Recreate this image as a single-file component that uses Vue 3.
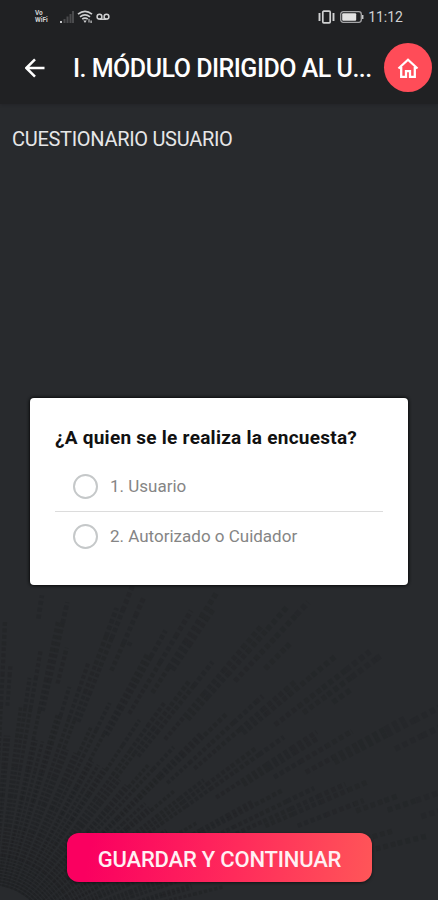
<template>
  <div class="screen">
    <header class="header">
      <div class="status-bar">
        <div class="status-left">
          <div class="vowifi">
            <span>Vo</span>
            <span>WiFi</span>
          </div>
          <svg class="signal" viewBox="0 0 16 14">
            <path d="M1 11h2v2h-2z" fill="#c8c9ca" />
            <path d="M4.500 9h2v4h-2zM7.500 6.500h2v6.500h-2zM10.500 4h2v9h-2zM13 1h2v12h-2z" fill="#4a4b4d" />
          </svg>
          <svg class="wifi" viewBox="0 0 16 14">
            <g fill="none" stroke="#d0d1d2" stroke-width="1.700">
              <path d="M1 4.200q7-5.600 14 0" />
              <path d="M3 6.800q5-4 10 0" />
              <path d="M5.200 9.200q2.800-2.200 5.600 0" />
            </g>
            <path d="M6.300 10.500h3.400L8 13zM11.500 9h1v3.500h-1zM13.500 10.500h1.200v2.500h-1.200z" fill="#d0d1d2" />
          </svg>
          <svg class="voicemail" viewBox="0 0 14 8">
            <g fill="none" stroke="#d0d1d2" stroke-width="1.500">
              <circle cx="3.500" cy="3.700" r="2.400" />
              <circle cx="10.500" cy="3.700" r="2.400" />
              <path d="M3.500 6.200h7" />
            </g>
          </svg>
        </div>
        <div class="status-right">
          <svg class="vibrate" viewBox="0 0 17 14">
            <rect x="4.800" y="1.200" width="7.400" height="11.600" rx="1" fill="none" stroke="#d0d1d2" stroke-width="1.700" />
            <path d="M1.500 3v8M15.500 3v8" fill="none" stroke="#d0d1d2" stroke-width="1.900" />
          </svg>
          <svg class="battery" viewBox="0 0 24 12">
            <rect x=".7" y=".7" width="20.600" height="10.600" rx="2.500" fill="none" stroke="#a5a6a8" stroke-width="1.300" />
            <rect x="2.200" y="2.200" width="14" height="7.600" rx="1" fill="#e2e2e2" />
            <path d="M22.700 4v4" stroke="#c8c9ca" stroke-width="1.500" />
          </svg>
          <span class="clock">11:12</span>
        </div>
      </div>
      <div class="toolbar">
        <button class="back-btn">
          <svg viewBox="0 0 20 20">
            <path d="M19.500 10H2M10 1.300L1.300 10l8.700 8.700" fill="none" stroke="#fff" stroke-width="2.500" />
          </svg>
        </button>
        <h1 class="title">I. MÓDULO DIRIGIDO AL U...</h1>
        <button class="home-btn">
          <svg viewBox="0 0 22 20">
            <path d="M1.500 10.500L11 1.700l9.500 8.800M4.200 9v9.800h4.800v-5.600h4v5.600h4.800V9" fill="none" stroke="#fff" stroke-width="2.300" />
          </svg>
        </button>
      </div>
    </header>

    <main class="content">
      <svg class="dots" viewBox="0 0 438 400">
        <path
          v-for="(ray, i) in rays"
          :key="i"
          :d="ray.d"
          :stroke-width="ray.width"
          :stroke-dasharray="ray.dash"
          :stroke-opacity="ray.opacity"
        />
      </svg>
      <h2 class="subtitle">CUESTIONARIO USUARIO</h2>
      <section class="card">
        <p class="question">¿A quien se le realiza la encuesta?</p>
        <label
          v-for="option in options"
          :key="option.id"
          class="option"
          @click="selected = option.id"
        >
          <span class="radio" :class="{ checked: selected === option.id }"></span>
          <span class="option-text">{{ option.id }}. {{ option.label }}</span>
        </label>
      </section>
      <button class="save-btn">GUARDAR Y CONTINUAR</button>
    </main>
  </div>
</template>

<script setup>
import { ref } from 'vue'

const selected = ref(null)

const options = [
  { id: 1, label: 'Usuario' },
  { id: 2, label: 'Autorizado o Cuidador' },
]

// dotted rays opening from the lower left corner
const rays = []
for (let i = 0; i < 58; i++) {
  const degrees = 14 + i * 1.5 + Math.sin(i * 2.3) * 0.4
  const angle = (degrees * Math.PI) / 180
  const x = Math.cos(angle)
  const y = Math.sin(angle)
  const end = 310 + x * 160 + Math.sin(i * 0.9) * 60
  for (let from = 60; from < end; from += 30) {
    // leave uneven holes between the clusters
    if (from > 190 && Math.sin(i * 1.1 + from * 0.03) > 0.4) continue
    const to = Math.min(from + 30, end)
    const width = 1.6 + from / 110
    rays.push({
      d: `M${x * from - 10} ${445 - y * from}L${x * to - 10} ${445 - y * to}`,
      width,
      dash: `${width * 0.9} ${width * 0.6}`,
      opacity: 0.55 - from / 1300,
    })
  }
}
</script>

<style>
body {
  margin: 0;
  background-color: #282a2d;
}
</style>

<style scoped>
.screen {
  display: flex;
  flex-direction: column;
  width: 100%;
  height: 900px;
  overflow: hidden;
  background-color: #282a2d;
  font-family: Roboto, sans-serif;
}

button {
  padding: 0;
  border: none;
  font-family: inherit;
  cursor: pointer;
}

svg {
  display: block;
}

.header {
  height: 104px;
  background-color: #202123;
  box-shadow: 0 1px 2px rgba(34, 34, 38, 0.7);
}

.status-bar {
  display: flex;
  justify-content: space-between;
  align-items: center;
  height: 34px;
  padding: 0 35px;
}

.status-left,
.status-right {
  display: flex;
  align-items: center;
}

.vowifi {
  display: flex;
  flex-direction: column;
  width: 18px;
  margin-right: 6px;
  color: #d0d1d2;
  font-size: 6.5px;
  font-weight: 700;
  line-height: 7px;
}

.signal {
  width: 16px;
  height: 14px;
}

.wifi {
  width: 16px;
  height: 14px;
  margin-left: 2px;
}

.voicemail {
  width: 14px;
  height: 8px;
  margin-left: 3px;
}

.vibrate {
  width: 17px;
  height: 14px;
}

.battery {
  width: 24px;
  height: 12px;
  margin-left: 5px;
}

.clock {
  margin-left: 4px;
  color: #d0d1d2;
  font-size: 14px;
  line-height: 16px;
}

.toolbar {
  display: flex;
  align-items: center;
  height: 67px;
  padding: 0 6px 0 25px;
}

.back-btn {
  width: 20px;
  height: 20px;
  background: none;
}

.title {
  flex: 1;
  margin: 3px 0 0 28px;
  color: #fff;
  font-size: 25px;
  font-weight: 500;
  line-height: 30px;
  letter-spacing: -0.5px;
  white-space: nowrap;
}

.home-btn {
  display: flex;
  align-items: center;
  justify-content: center;
  width: 48px;
  height: 49px;
  border-radius: 50%;
  background-color: #ff4c58;
}

.home-btn svg {
  width: 22px;
  height: 20px;
}

.content {
  position: relative;
  flex: 1;
  display: flex;
  flex-direction: column;
}

/* decorative background, lies under the form */
.dots {
  position: absolute;
  left: 0;
  bottom: 0;
  width: 438px;
  height: 400px;
  fill: none;
  stroke: #1c1e20;
}

.subtitle {
  position: relative;
  margin: 22px 0 0 12px;
  color: #e6e6e7;
  font-size: 20px;
  font-weight: 400;
  line-height: 26px;
  letter-spacing: -0.3px;
}

.card {
  position: relative;
  box-sizing: border-box;
  width: 378px;
  height: 187px;
  margin: 246px 0 0 30px;
  padding: 27px 25px 0;
  border-radius: 4px;
  background-color: #fff;
  box-shadow: 0 0 3px 1px #0b0c0d;
}

.question {
  margin: 0 0 10px;
  color: #111;
  font-size: 19px;
  font-weight: 700;
  line-height: 26px;
  letter-spacing: 0.26px;
  white-space: nowrap;
}

.option {
  display: flex;
  align-items: center;
  box-sizing: border-box;
  height: 50px;
  padding-left: 18px;
  color: #858585;
  font-size: 17px;
}

.option + .option {
  height: 49px;
  border-top: 1px solid #dcdcdc;
}

.radio {
  box-sizing: border-box;
  width: 25px;
  height: 25px;
  margin-right: 12px;
  border: 2px solid #c5c8c9;
  border-radius: 50%;
}

.radio.checked {
  border: 7px solid #ff2a5b;
}

.save-btn {
  position: relative;
  width: 305px;
  height: 49px;
  margin: auto 0 18px 67px;
  padding-top: 3px;
  border-radius: 12px;
  background: linear-gradient(100deg, #fa0060 8%, #ff2a5b 55%, #ff5658 100%);
  box-shadow: 0 1px 3px rgba(10, 12, 13, 0.7);
  color: #fff0f3;
  font-size: 22px;
  font-weight: 500;
  letter-spacing: -0.2px;
}
</style>
